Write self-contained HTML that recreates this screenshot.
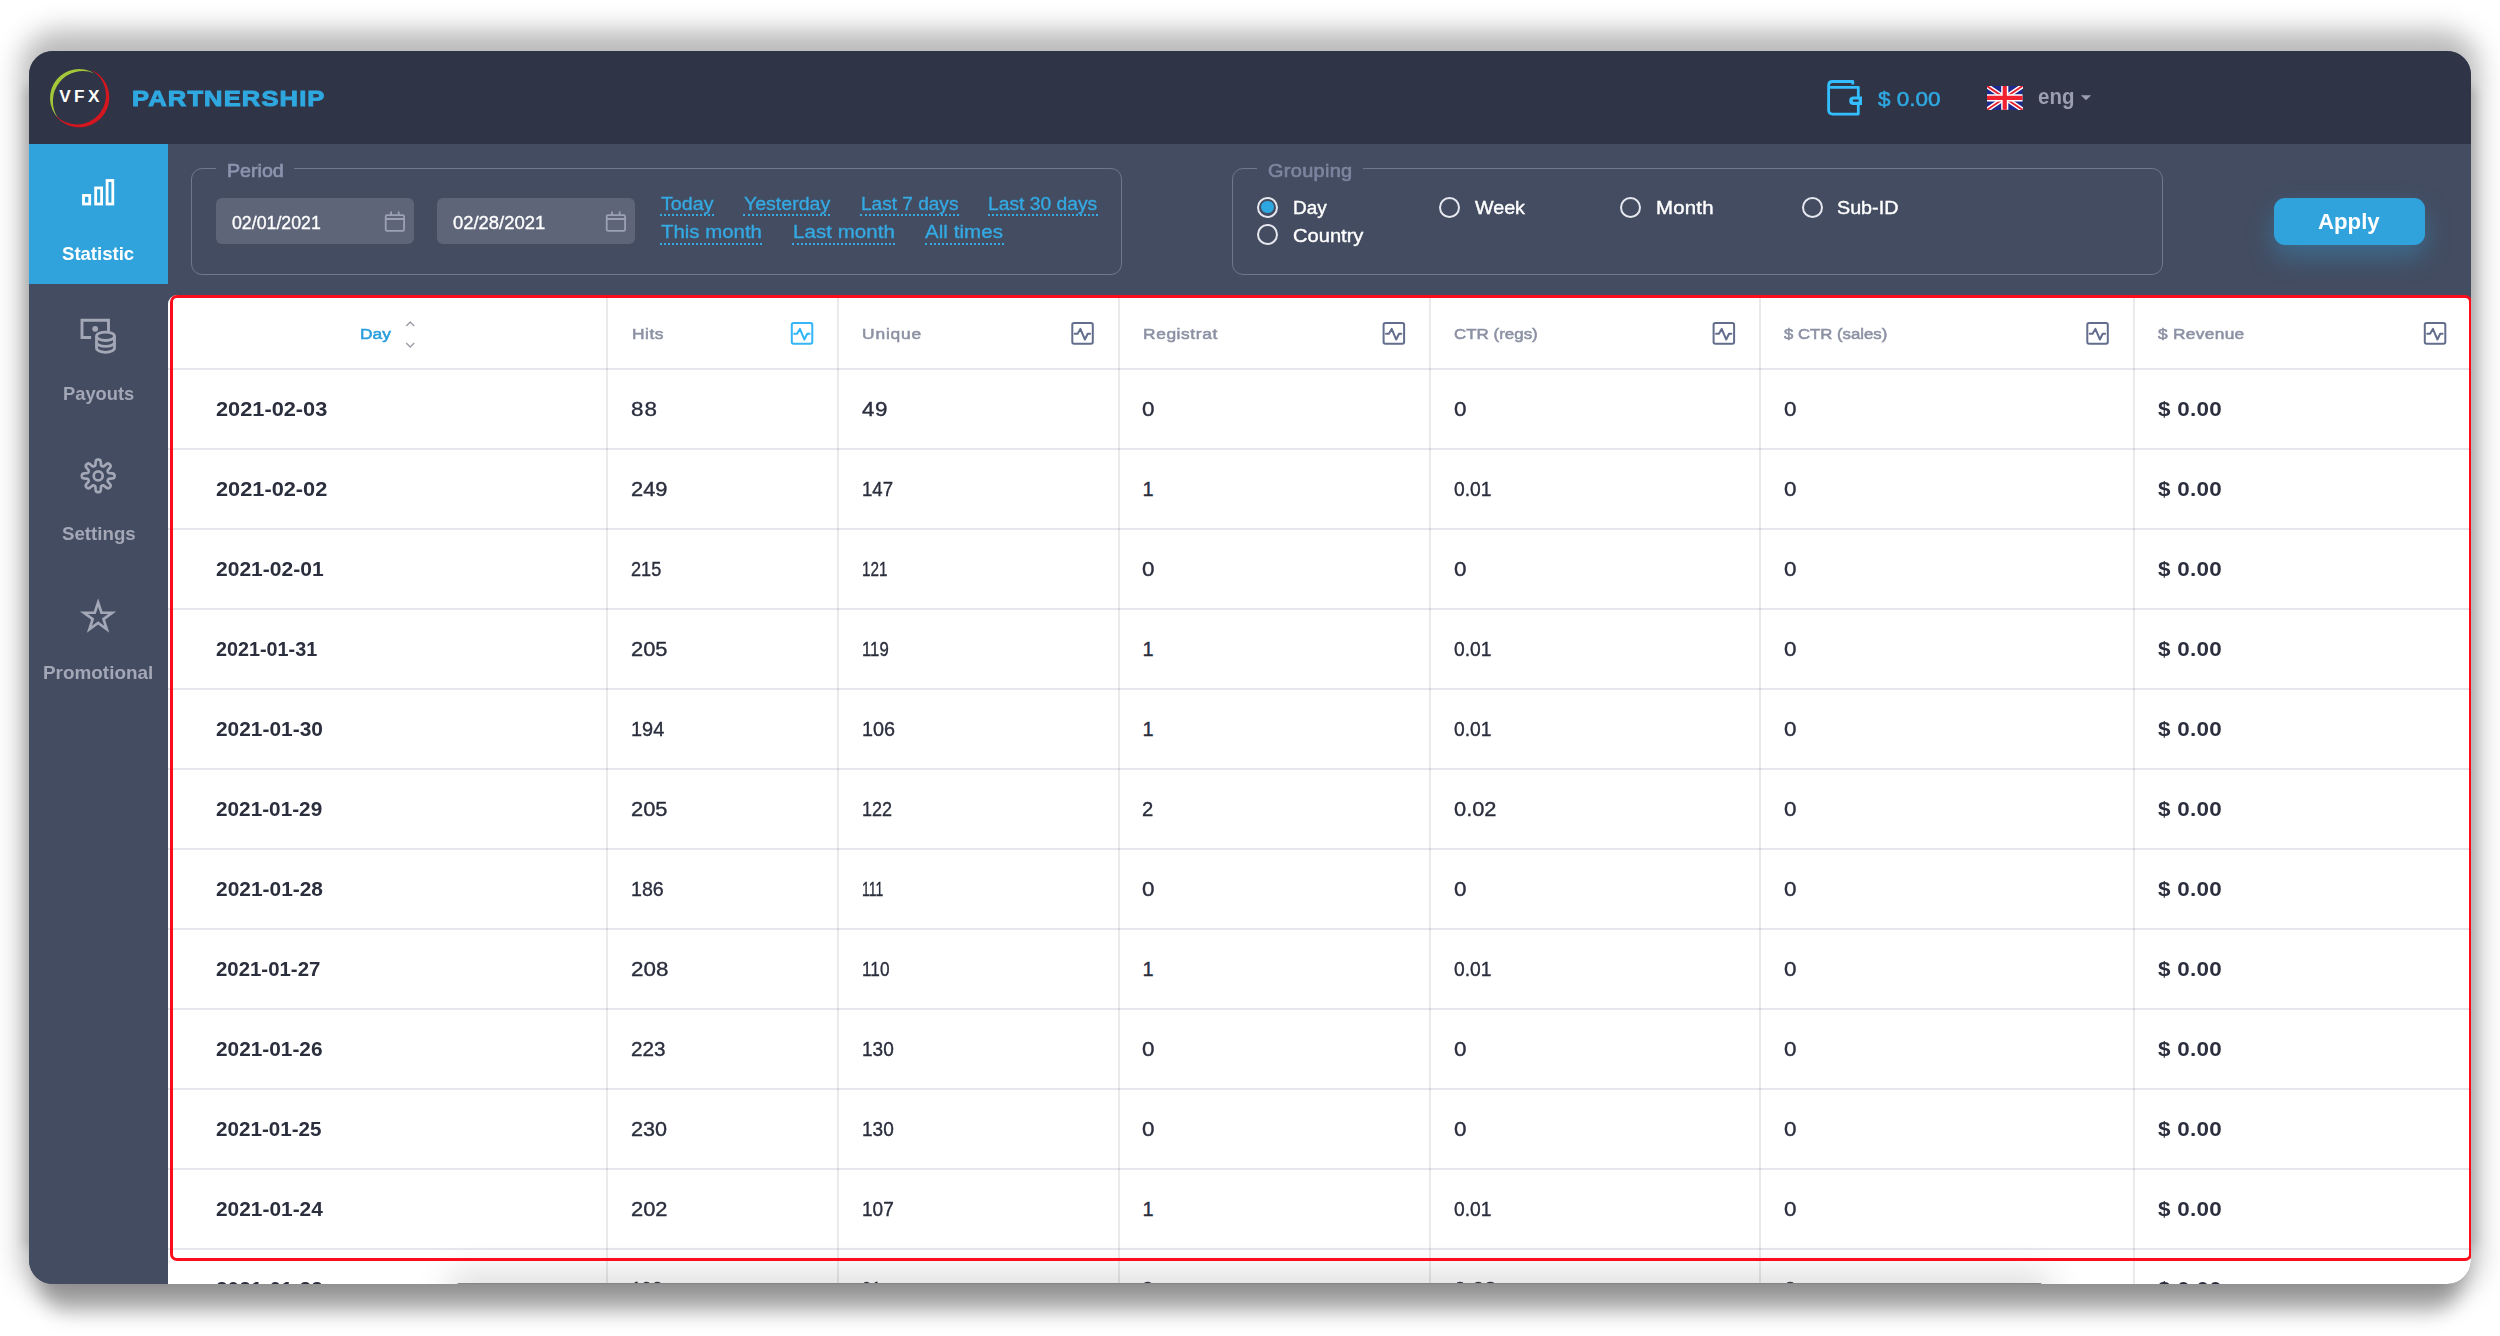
<!DOCTYPE html>
<html lang="en"><head><meta charset="utf-8"><title>VFX Partnership – Statistic</title>
<style>
html,body{margin:0;padding:0}
body{width:2500px;height:1336px;overflow:hidden;background:#fff;position:relative;font-family:"Liberation Sans",Arial,sans-serif}
.win{position:absolute;left:29px;top:51px;width:2442px;height:1233px;border-radius:24px;background:#434c61;
 }
.sh{position:absolute;border-radius:24px}
.clip{position:absolute;left:0;top:0;right:0;bottom:0;border-radius:24px;overflow:hidden}
.o{position:absolute;left:-29px;top:-51px;width:2500px;height:1336px}
.o *{position:absolute;box-sizing:border-box}
.t{white-space:nowrap;line-height:1;font-weight:400;transform-origin:0 50%}
svg{overflow:visible}
.grp{left:0;top:0;width:0;height:0}
.hbg{left:29px;top:51px;width:2442px;height:93px;background:#2f3446}
.nbg{left:29px;top:144px;width:139px;height:1140px;background:#434c61}
.act{left:29px;top:144px;width:139px;height:140px;background:#31a3dc}
.fs{border:1.5px solid #6f7791;border-radius:11px}
.legbg{background:#434c61}
.inp{background:#5e6579;border-radius:6px}
.dot{border-bottom:2px dotted #35a9e2;height:2px}
.radio{width:21px;height:21px;border:2px solid #e7e8ef;border-radius:50%}
.radio i{left:2.2px;top:2.2px;width:12.6px;height:12.6px;border-radius:50%;background:#2ea7e0}
.btn{left:2274px;top:198px;width:151px;height:46.5px;border-radius:11px;background:#31a3dc;box-shadow:0 12px 26px rgba(49,163,220,.36)}
.tbl{left:168px;top:295px;width:2303px;height:989px;background:#fff;border-radius:9px 9px 0 0}
.hl{left:168px;width:2303px;height:2px;background:rgba(70,76,110,.135)}
.vl{top:298px;width:2px;height:986px;background:rgba(70,72,100,.115)}
.red{left:170px;top:295px;width:2301.5px;height:966px;border:3px solid #fb0d1b;border-radius:7px}
.sb{left:457px;top:1283px;width:1585px;height:14px;background:#858585;border-radius:2px;box-shadow:0 0 34px 8px rgba(0,0,0,.16)}
</style></head><body>
<div class="sh" style="left:21px;top:30px;width:2458px;height:1264px;border-radius:38px;background:rgba(0,0,0,.27);filter:blur(13.5px)"></div>
<div class="sh" style="left:23px;top:85px;width:2454px;height:1165px;border-radius:10px;background:rgba(0,0,0,.12);filter:blur(5px)"></div>
<div class="sh" style="left:39px;top:1240px;width:2422px;height:72px;border-radius:30px;background:rgba(0,0,0,.28);filter:blur(10px)"></div>
<div class="win"><div class="clip"><div class="o">
<header class="grp"><div class="hbg"></div><svg style="left:45px;top:65px" width="70" height="66" viewBox="45 65 70 66" ><path d="M94.37 73.41A29.00 29.00 0 0 0 58.14 118.15A30.03 30.03 0 0 1 94.37 73.41Z" fill="#a4c639"/><path d="M90.54 69.48A30.00 30.00 0 1 1 54.73 114.51A29.24 29.24 0 1 0 90.54 69.48Z" fill="#d4161f"/></svg><span class="t" style="left:59.20px;top:87.64px;font-size:17.2px;letter-spacing:3.423px;font-weight:700;color:#fff;">VFX</span><span class="t" style="left:131.80px;top:87.00px;font-size:22.8px;letter-spacing:1.007px;transform:scaleX(1.1200);font-weight:700;color:#2fa8e0;-webkit-text-stroke:1.0px #2fa8e0;">PARTNERSHIP</span><svg style="left:1825px;top:78px" width="40" height="40" viewBox="1825 78 40 40" ><path d="M1852.8 84.6V81.5H1832.6Q1828.6 81.5 1828.6 85.5V110.1Q1828.6 114.1 1832.6 114.1H1858.3V87.3H1829" fill="none" stroke="#33bfff" stroke-width="2.8" stroke-linejoin="round"/><path d="M1862 96.4H1853.5Q1849.2 96.4 1849.2 100.7Q1849.2 105 1853.5 105H1862Z" fill="#33bfff"/><rect x="1852.8" y="99.6" width="6" height="2.2" rx="1" fill="#2f3446"/></svg><span class="t" style="left:1878.00px;top:87.82px;font-size:21px;transform:scaleX(1.0706);color:#2fa8e0;-webkit-text-stroke:0.55px #2fa8e0;">$ 0.00</span><svg style="left:1987px;top:86px;overflow:hidden" width="35.5" height="23.8" viewBox="0 0 60 40" preserveAspectRatio="none"><rect width="60" height="40" fill="#1b2a8c"/><path d="M0 0L60 40M60 0L0 40" stroke="#fff" stroke-width="8"/><path d="M0 0L60 40M60 0L0 40" stroke="#e8202e" stroke-width="3.2"/><path d="M30 0V40M0 20H60" stroke="#fff" stroke-width="12"/><path d="M30 0V40M0 20H60" stroke="#f0202e" stroke-width="7"/></svg><span class="t" style="left:2037.60px;top:86.60px;font-size:21.5px;transform:scaleX(0.9522);font-weight:700;color:#9a9eb0;">eng</span><svg style="left:2080px;top:94px" width="12" height="8" viewBox="2080 94 12 8" ><path d="M2080.8 95.2H2091.2L2086 100.2Z" fill="#9a9eb0"/></svg></header><nav class="grp"><div class="nbg"></div><div class="act"></div><svg style="left:80px;top:177px" width="36" height="30" viewBox="80 177 36 30" ><rect x="83.5" y="195.4" width="6.20" height="8.60" fill="none" stroke="#fff" stroke-width="2.8"/><rect x="95.65" y="187.95000000000002" width="5.95" height="16.05" fill="none" stroke="#fff" stroke-width="2.8"/><rect x="107.10000000000001" y="180.5" width="5.70" height="23.50" fill="none" stroke="#fff" stroke-width="2.8"/></svg><span class="t" style="left:62.20px;top:245.05px;font-size:18.6px;transform:scaleX(0.9979);font-weight:700;color:#fff;">Statistic</span><svg style="left:79px;top:317px" width="40" height="40" viewBox="79 317 40 40" ><path d="M91.1 337.5H82V320.2H108.5V331" fill="none" stroke="#a3a7b6" stroke-width="2.9"/><circle cx="95.2" cy="328.8" r="2.9" fill="#a3a7b6"/><g fill="none" stroke="#a3a7b6" stroke-width="2.8"><ellipse cx="105.5" cy="336.3" rx="9" ry="4.2"/><path d="M96.5 336.3V348.1A9 4.2 0 0 0 114.5 348.1V336.3"/><path d="M96.5 342.2A9 4.2 0 0 0 114.5 342.2"/></g></svg><span class="t" style="left:62.60px;top:384.75px;font-size:18.6px;transform:scaleX(0.9854);font-weight:700;color:#a3a7b6;">Payouts</span><svg style="left:79px;top:457px" width="40" height="40" viewBox="79 457 40 40" ><path d="M114.50 475.90L114.48 476.33L114.43 476.75L114.33 477.17L114.13 477.57L113.76 477.95L113.07 478.25L111.99 478.45L110.70 478.56L109.62 478.64L108.93 478.78L108.54 478.96L108.30 479.18L108.14 479.42L108.01 479.67L107.90 479.92L107.80 480.17L107.72 480.44L107.66 480.72L107.67 481.04L107.82 481.45L108.22 482.04L108.92 482.86L109.75 483.84L110.38 484.75L110.65 485.45L110.65 485.98L110.50 486.41L110.28 486.78L110.02 487.11L109.73 487.43L109.41 487.72L109.08 487.98L108.71 488.20L108.28 488.35L107.75 488.35L107.05 488.08L106.14 487.45L105.16 486.62L104.34 485.92L103.75 485.52L103.34 485.37L103.02 485.36L102.74 485.42L102.47 485.50L102.22 485.60L101.97 485.71L101.72 485.84L101.48 486.00L101.26 486.24L101.08 486.63L100.94 487.32L100.86 488.40L100.75 489.69L100.55 490.77L100.25 491.46L99.87 491.83L99.47 492.03L99.05 492.13L98.63 492.18L98.20 492.20L97.77 492.18L97.35 492.13L96.93 492.03L96.53 491.83L96.15 491.46L95.85 490.77L95.65 489.69L95.54 488.40L95.46 487.32L95.32 486.63L95.14 486.24L94.92 486.00L94.68 485.84L94.43 485.71L94.18 485.60L93.93 485.50L93.66 485.42L93.38 485.36L93.06 485.37L92.65 485.52L92.06 485.92L91.24 486.62L90.26 487.45L89.35 488.08L88.65 488.35L88.12 488.35L87.69 488.20L87.32 487.98L86.99 487.72L86.67 487.43L86.38 487.11L86.12 486.78L85.90 486.41L85.75 485.98L85.75 485.45L86.02 484.75L86.65 483.84L87.48 482.86L88.18 482.04L88.58 481.45L88.73 481.04L88.74 480.72L88.68 480.44L88.60 480.17L88.50 479.92L88.39 479.67L88.26 479.42L88.10 479.18L87.86 478.96L87.47 478.78L86.78 478.64L85.70 478.56L84.41 478.45L83.33 478.25L82.64 477.95L82.27 477.57L82.07 477.17L81.97 476.75L81.92 476.33L81.90 475.90L81.92 475.47L81.97 475.05L82.07 474.63L82.27 474.23L82.64 473.85L83.33 473.55L84.41 473.35L85.70 473.24L86.78 473.16L87.47 473.02L87.86 472.84L88.10 472.62L88.26 472.38L88.39 472.13L88.50 471.88L88.60 471.63L88.68 471.36L88.74 471.08L88.73 470.76L88.58 470.35L88.18 469.76L87.48 468.94L86.65 467.96L86.02 467.05L85.75 466.35L85.75 465.82L85.90 465.39L86.12 465.02L86.38 464.69L86.67 464.37L86.99 464.08L87.32 463.82L87.69 463.60L88.12 463.45L88.65 463.45L89.35 463.72L90.26 464.35L91.24 465.18L92.06 465.88L92.65 466.28L93.06 466.43L93.38 466.44L93.66 466.38L93.93 466.30L94.18 466.20L94.43 466.09L94.68 465.96L94.92 465.80L95.14 465.56L95.32 465.17L95.46 464.48L95.54 463.40L95.65 462.11L95.85 461.03L96.15 460.34L96.53 459.97L96.93 459.77L97.35 459.67L97.77 459.62L98.20 459.60L98.63 459.62L99.05 459.67L99.47 459.77L99.87 459.97L100.25 460.34L100.55 461.03L100.75 462.11L100.86 463.40L100.94 464.48L101.08 465.17L101.26 465.56L101.48 465.80L101.72 465.96L101.97 466.09L102.22 466.20L102.47 466.30L102.74 466.38L103.02 466.44L103.34 466.43L103.75 466.28L104.34 465.88L105.16 465.18L106.14 464.35L107.05 463.72L107.75 463.45L108.28 463.45L108.71 463.60L109.08 463.82L109.41 464.08L109.73 464.37L110.02 464.69L110.28 465.02L110.50 465.39L110.65 465.82L110.65 466.35L110.38 467.05L109.75 467.96L108.92 468.94L108.22 469.76L107.82 470.35L107.67 470.76L107.66 471.08L107.72 471.36L107.80 471.63L107.90 471.88L108.01 472.13L108.14 472.38L108.30 472.62L108.54 472.84L108.93 473.02L109.62 473.16L110.70 473.24L111.99 473.35L113.07 473.55L113.76 473.85L114.13 474.23L114.33 474.63L114.43 475.05L114.48 475.47Z" fill="none" stroke="#a3a7b6" stroke-width="2.7" stroke-linejoin="round"/><circle cx="98.2" cy="475.9" r="4.5" fill="none" stroke="#a3a7b6" stroke-width="2.7"/></svg><span class="t" style="left:61.50px;top:524.55px;font-size:18.6px;transform:scaleX(1.0058);font-weight:700;color:#a3a7b6;">Settings</span><svg style="left:79px;top:597px" width="40" height="40" viewBox="79 597 40 40" ><path d="M98.10 602.50L101.45 612.69L112.18 612.73L103.52 619.06L106.80 629.27L98.10 623.00L89.40 629.27L92.68 619.06L84.02 612.73L94.75 612.69Z" fill="none" stroke="#a3a7b6" stroke-width="2.7" stroke-linejoin="miter" stroke-miterlimit="10"/></svg><span class="t" style="left:43.10px;top:664.25px;font-size:18.6px;transform:scaleX(1.0165);font-weight:700;color:#a3a7b6;">Promotional</span></nav><section class="grp"><div class="fs" style="left:190.7px;top:167.5px;width:931.5px;height:107.5px"></div><div class="legbg" style="left:216px;top:160px;width:78px;height:16px"></div><span class="t" style="left:227.40px;top:162.93px;font-size:17.8px;transform:scaleX(1.1038);color:#8d94af;-webkit-text-stroke:0.6px #8d94af;">Period</span><div class="inp" style="left:216px;top:198px;width:197.7px;height:46.3px"></div><span class="t" style="left:232.00px;top:213.21px;font-size:19px;transform:scaleX(0.9333);color:#fff;-webkit-text-stroke:0.35px #fff;">02/01/2021</span><svg style="left:383px;top:210px" width="25" height="24" viewBox="383 210 25 24" ><g fill="none" stroke="#9ba1b3" stroke-width="1.8"><rect x="385.7" y="215.1" width="18.4" height="15.8" rx="1.5"/><path d="M385.7 219H404.09999999999997M391.09999999999997 211.5V215M398.7 211.5V215"/></g></svg><div class="inp" style="left:437px;top:198px;width:197.7px;height:46.3px"></div><span class="t" style="left:453.25px;top:213.21px;font-size:19px;transform:scaleX(0.9701);color:#fff;-webkit-text-stroke:0.35px #fff;">02/28/2021</span><svg style="left:604px;top:210px" width="25" height="24" viewBox="604 210 25 24" ><g fill="none" stroke="#9ba1b3" stroke-width="1.8"><rect x="606.7" y="215.1" width="18.4" height="15.8" rx="1.5"/><path d="M606.7 219H625.1M612.1 211.5V215M619.7 211.5V215"/></g></svg><span class="t" style="left:660.75px;top:194.51px;font-size:18.3px;transform:scaleX(1.0753);color:#35a9e2;-webkit-text-stroke:0.35px #35a9e2;">Today</span><div class="dot" style="left:660.25px;top:214.3px;width:53.5px"></div><span class="t" style="left:743.75px;top:194.51px;font-size:18.3px;transform:scaleX(1.0685);color:#35a9e2;-webkit-text-stroke:0.35px #35a9e2;">Yesterday</span><div class="dot" style="left:743.25px;top:214.3px;width:87.2px"></div><span class="t" style="left:860.50px;top:194.51px;font-size:18.3px;transform:scaleX(1.0418);color:#35a9e2;-webkit-text-stroke:0.35px #35a9e2;">Last 7 days</span><div class="dot" style="left:860.0px;top:214.3px;width:98.5px"></div><span class="t" style="left:988.25px;top:194.51px;font-size:18.3px;transform:scaleX(1.0529);color:#35a9e2;-webkit-text-stroke:0.35px #35a9e2;">Last 30 days</span><div class="dot" style="left:987.75px;top:214.3px;width:110.2px"></div><span class="t" style="left:660.75px;top:223.31px;font-size:18.3px;transform:scaleX(1.1159);color:#35a9e2;-webkit-text-stroke:0.35px #35a9e2;">This month</span><div class="dot" style="left:660.25px;top:243.10000000000002px;width:102.0px"></div><span class="t" style="left:792.50px;top:223.31px;font-size:18.3px;letter-spacing:0.060px;transform:scaleX(1.1200);color:#35a9e2;-webkit-text-stroke:0.35px #35a9e2;">Last month</span><div class="dot" style="left:792.0px;top:243.10000000000002px;width:103.0px"></div><span class="t" style="left:925.00px;top:223.31px;font-size:18.3px;letter-spacing:0.063px;transform:scaleX(1.1200);color:#35a9e2;-webkit-text-stroke:0.35px #35a9e2;">All times</span><div class="dot" style="left:924.5px;top:243.10000000000002px;width:79.0px"></div><div class="fs" style="left:1231.8px;top:167.5px;width:931.5px;height:107.5px"></div><div class="legbg" style="left:1257px;top:160px;width:106px;height:16px"></div><span class="t" style="left:1267.50px;top:162.93px;font-size:17.8px;letter-spacing:0.285px;transform:scaleX(1.1200);color:#7d859f;-webkit-text-stroke:0.6px #7d859f;">Grouping</span><div class="radio" style="left:1256.9px;top:196.5px"><i></i></div><span class="t" style="left:1293.10px;top:198.99px;font-size:18.2px;transform:scaleX(1.0414);color:#fff;-webkit-text-stroke:0.4px #fff;">Day</span><div class="radio" style="left:1438.7px;top:196.5px"></div><span class="t" style="left:1474.50px;top:198.99px;font-size:18.2px;transform:scaleX(1.0816);color:#fff;-webkit-text-stroke:0.4px #fff;">Week</span><div class="radio" style="left:1620.3px;top:196.5px"></div><span class="t" style="left:1656.25px;top:198.99px;font-size:18.2px;letter-spacing:0.190px;transform:scaleX(1.1200);color:#fff;-webkit-text-stroke:0.4px #fff;">Month</span><div class="radio" style="left:1801.9px;top:196.5px"></div><span class="t" style="left:1837.20px;top:198.99px;font-size:18.2px;transform:scaleX(1.0841);color:#fff;-webkit-text-stroke:0.4px #fff;">Sub-ID</span><div class="radio" style="left:1256.9px;top:224.2px"></div><span class="t" style="left:1292.80px;top:226.69px;font-size:18.2px;transform:scaleX(1.1056);color:#fff;-webkit-text-stroke:0.4px #fff;">Country</span><div class="btn"></div><span class="t" style="left:2318.25px;top:210.85px;font-size:21.2px;transform:scaleX(1.0485);font-weight:700;color:#fff;">Apply</span></section><main class="grp"><div class="tbl"></div><div class="vl" style="left:605.75px"></div><div class="vl" style="left:837.00px"></div><div class="vl" style="left:1117.75px"></div><div class="vl" style="left:1428.80px"></div><div class="vl" style="left:1759.00px"></div><div class="vl" style="left:2133.10px"></div><div class="hl" style="top:368px"></div><div class="hl" style="top:448px"></div><div class="hl" style="top:528px"></div><div class="hl" style="top:608px"></div><div class="hl" style="top:688px"></div><div class="hl" style="top:768px"></div><div class="hl" style="top:848px"></div><div class="hl" style="top:928px"></div><div class="hl" style="top:1008px"></div><div class="hl" style="top:1088px"></div><div class="hl" style="top:1168px"></div><div class="hl" style="top:1248px"></div><span class="t" style="left:359.90px;top:325.78px;font-size:15.5px;letter-spacing:0.015px;transform:scaleX(1.1200);color:#2a9fdc;-webkit-text-stroke:0.55px #2a9fdc;">Day</span><svg style="left:404px;top:319px" width="13" height="31" viewBox="404 319 13 31" ><path d="M406.2 326L410.2 322L414.2 326M406.2 343L410.2 347L414.2 343" fill="none" stroke="#9d9fa9" stroke-width="1.5"/></svg><span class="t" style="left:631.50px;top:325.78px;font-size:15.5px;letter-spacing:0.448px;transform:scaleX(1.1200);color:#8c91a4;-webkit-text-stroke:0.55px #8c91a4;">Hits</span><span class="t" style="left:862.00px;top:325.78px;font-size:15.5px;letter-spacing:0.756px;transform:scaleX(1.1200);color:#8c91a4;-webkit-text-stroke:0.55px #8c91a4;">Unique</span><span class="t" style="left:1143.30px;top:325.78px;font-size:15.5px;letter-spacing:0.529px;transform:scaleX(1.1200);color:#8c91a4;-webkit-text-stroke:0.55px #8c91a4;">Registrat</span><span class="t" style="left:1453.75px;top:325.78px;font-size:15.5px;transform:scaleX(1.0929);color:#8c91a4;-webkit-text-stroke:0.55px #8c91a4;">CTR (regs)</span><span class="t" style="left:1783.75px;top:325.78px;font-size:15.5px;transform:scaleX(1.0800);color:#8c91a4;-webkit-text-stroke:0.55px #8c91a4;">$ CTR (sales)</span><span class="t" style="left:2157.50px;top:325.78px;font-size:15.5px;letter-spacing:0.254px;transform:scaleX(1.1200);color:#8c91a4;-webkit-text-stroke:0.55px #8c91a4;">$ Revenue</span><svg style="left:790px;top:321px" width="25" height="25" viewBox="790 321 25 25" ><g fill="none" stroke="#33b5f7" stroke-width="2" stroke-linejoin="round" stroke-linecap="round"><rect x="791.8" y="322.9" width="20.5" height="20.9" rx="1.8"/><path d="M794.1999999999999 333.8H797.0999999999999L799.9 328.9L804.4 339.5L807.1999999999999 333.8H809.5999999999999"/></g></svg><svg style="left:1071px;top:321px" width="25" height="25" viewBox="1071 321 25 25" ><g fill="none" stroke="#636d8c" stroke-width="2" stroke-linejoin="round" stroke-linecap="round"><rect x="1072.3" y="322.9" width="20.5" height="20.9" rx="1.8"/><path d="M1074.7 333.8H1077.6L1080.3999999999999 328.9L1084.8999999999999 339.5L1087.7 333.8H1090.1"/></g></svg><svg style="left:1382px;top:321px" width="25" height="25" viewBox="1382 321 25 25" ><g fill="none" stroke="#636d8c" stroke-width="2" stroke-linejoin="round" stroke-linecap="round"><rect x="1383.6" y="322.9" width="20.5" height="20.9" rx="1.8"/><path d="M1386.0 333.8H1388.8999999999999L1391.6999999999998 328.9L1396.1999999999998 339.5L1399.0 333.8H1401.3999999999999"/></g></svg><svg style="left:1712px;top:321px" width="25" height="25" viewBox="1712 321 25 25" ><g fill="none" stroke="#636d8c" stroke-width="2" stroke-linejoin="round" stroke-linecap="round"><rect x="1713.6" y="322.9" width="20.5" height="20.9" rx="1.8"/><path d="M1716.0 333.8H1718.8999999999999L1721.6999999999998 328.9L1726.1999999999998 339.5L1729.0 333.8H1731.3999999999999"/></g></svg><svg style="left:2086px;top:321px" width="25" height="25" viewBox="2086 321 25 25" ><g fill="none" stroke="#636d8c" stroke-width="2" stroke-linejoin="round" stroke-linecap="round"><rect x="2087.3" y="322.9" width="20.5" height="20.9" rx="1.8"/><path d="M2089.7000000000003 333.8H2092.6000000000004L2095.4 328.9L2099.9 339.5L2102.7000000000003 333.8H2105.1000000000004"/></g></svg><svg style="left:2423px;top:321px" width="25" height="25" viewBox="2423 321 25 25" ><g fill="none" stroke="#636d8c" stroke-width="2" stroke-linejoin="round" stroke-linecap="round"><rect x="2424.8" y="322.9" width="20.5" height="20.9" rx="1.8"/><path d="M2427.2000000000003 333.8H2430.1000000000004L2432.9 328.9L2437.4 339.5L2440.2000000000003 333.8H2442.6000000000004"/></g></svg><span class="t" style="left:216.25px;top:399.07px;font-size:20px;transform:scaleX(1.0880);font-weight:700;color:#2a2e3d;">2021-02-03</span><span class="t" style="left:630.75px;top:399.07px;font-size:20px;letter-spacing:0.974px;transform:scaleX(1.1200);color:#2a2e3d;-webkit-text-stroke:0.35px #2a2e3d;">88</span><span class="t" style="left:862.00px;top:399.07px;font-size:20px;letter-spacing:0.528px;transform:scaleX(1.1200);color:#2a2e3d;-webkit-text-stroke:0.35px #2a2e3d;">49</span><span class="t" style="left:1142.40px;top:399.07px;font-size:20px;transform:scaleX(1.1200);color:#2a2e3d;-webkit-text-stroke:0.35px #2a2e3d;">0</span><span class="t" style="left:1453.75px;top:399.07px;font-size:20px;transform:scaleX(1.1200);color:#2a2e3d;-webkit-text-stroke:0.35px #2a2e3d;">0</span><span class="t" style="left:1783.75px;top:399.07px;font-size:20px;transform:scaleX(1.1200);color:#2a2e3d;-webkit-text-stroke:0.35px #2a2e3d;">0</span><span class="t" style="left:2157.50px;top:399.07px;font-size:20px;letter-spacing:0.264px;transform:scaleX(1.1200);font-weight:700;color:#2a2e3d;">$ 0.00</span><span class="t" style="left:216.25px;top:479.07px;font-size:20px;transform:scaleX(1.0880);font-weight:700;color:#2a2e3d;">2021-02-02</span><span class="t" style="left:630.75px;top:479.07px;font-size:20px;transform:scaleX(1.0941);color:#2a2e3d;-webkit-text-stroke:0.35px #2a2e3d;">249</span><span class="t" style="left:862.00px;top:479.07px;font-size:20px;transform:scaleX(0.9293);color:#2a2e3d;-webkit-text-stroke:0.35px #2a2e3d;">147</span><span class="t" style="left:1142.40px;top:479.07px;font-size:20px;color:#2a2e3d;-webkit-text-stroke:0.35px #2a2e3d;">1</span><span class="t" style="left:1453.75px;top:479.07px;font-size:20px;transform:scaleX(0.9635);color:#2a2e3d;-webkit-text-stroke:0.35px #2a2e3d;">0.01</span><span class="t" style="left:1783.75px;top:479.07px;font-size:20px;transform:scaleX(1.1200);color:#2a2e3d;-webkit-text-stroke:0.35px #2a2e3d;">0</span><span class="t" style="left:2157.50px;top:479.07px;font-size:20px;letter-spacing:0.264px;transform:scaleX(1.1200);font-weight:700;color:#2a2e3d;">$ 0.00</span><span class="t" style="left:216.25px;top:559.07px;font-size:20px;transform:scaleX(1.0518);font-weight:700;color:#2a2e3d;">2021-02-01</span><span class="t" style="left:630.75px;top:559.07px;font-size:20px;transform:scaleX(0.9068);color:#2a2e3d;-webkit-text-stroke:0.35px #2a2e3d;">215</span><span class="t" style="left:862.00px;top:559.07px;font-size:20px;transform:scaleX(0.7644);color:#2a2e3d;-webkit-text-stroke:0.35px #2a2e3d;">121</span><span class="t" style="left:1142.40px;top:559.07px;font-size:20px;transform:scaleX(1.1200);color:#2a2e3d;-webkit-text-stroke:0.35px #2a2e3d;">0</span><span class="t" style="left:1453.75px;top:559.07px;font-size:20px;transform:scaleX(1.1200);color:#2a2e3d;-webkit-text-stroke:0.35px #2a2e3d;">0</span><span class="t" style="left:1783.75px;top:559.07px;font-size:20px;transform:scaleX(1.1200);color:#2a2e3d;-webkit-text-stroke:0.35px #2a2e3d;">0</span><span class="t" style="left:2157.50px;top:559.07px;font-size:20px;letter-spacing:0.264px;transform:scaleX(1.1200);font-weight:700;color:#2a2e3d;">$ 0.00</span><span class="t" style="left:216.25px;top:639.07px;font-size:20px;transform:scaleX(0.9892);font-weight:700;color:#2a2e3d;">2021-01-31</span><span class="t" style="left:630.75px;top:639.07px;font-size:20px;transform:scaleX(1.0941);color:#2a2e3d;-webkit-text-stroke:0.35px #2a2e3d;">205</span><span class="t" style="left:862.00px;top:639.07px;font-size:20px;transform:scaleX(0.8391);color:#2a2e3d;-webkit-text-stroke:0.35px #2a2e3d;">119</span><span class="t" style="left:1142.40px;top:639.07px;font-size:20px;color:#2a2e3d;-webkit-text-stroke:0.35px #2a2e3d;">1</span><span class="t" style="left:1453.75px;top:639.07px;font-size:20px;transform:scaleX(0.9635);color:#2a2e3d;-webkit-text-stroke:0.35px #2a2e3d;">0.01</span><span class="t" style="left:1783.75px;top:639.07px;font-size:20px;transform:scaleX(1.1200);color:#2a2e3d;-webkit-text-stroke:0.35px #2a2e3d;">0</span><span class="t" style="left:2157.50px;top:639.07px;font-size:20px;letter-spacing:0.264px;transform:scaleX(1.1200);font-weight:700;color:#2a2e3d;">$ 0.00</span><span class="t" style="left:216.25px;top:719.07px;font-size:20px;transform:scaleX(1.0450);font-weight:700;color:#2a2e3d;">2021-01-30</span><span class="t" style="left:630.75px;top:719.07px;font-size:20px;transform:scaleX(0.9967);color:#2a2e3d;-webkit-text-stroke:0.35px #2a2e3d;">194</span><span class="t" style="left:862.00px;top:719.07px;font-size:20px;transform:scaleX(0.9892);color:#2a2e3d;-webkit-text-stroke:0.35px #2a2e3d;">106</span><span class="t" style="left:1142.40px;top:719.07px;font-size:20px;color:#2a2e3d;-webkit-text-stroke:0.35px #2a2e3d;">1</span><span class="t" style="left:1453.75px;top:719.07px;font-size:20px;transform:scaleX(0.9635);color:#2a2e3d;-webkit-text-stroke:0.35px #2a2e3d;">0.01</span><span class="t" style="left:1783.75px;top:719.07px;font-size:20px;transform:scaleX(1.1200);color:#2a2e3d;-webkit-text-stroke:0.35px #2a2e3d;">0</span><span class="t" style="left:2157.50px;top:719.07px;font-size:20px;letter-spacing:0.264px;transform:scaleX(1.1200);font-weight:700;color:#2a2e3d;">$ 0.00</span><span class="t" style="left:216.25px;top:799.07px;font-size:20px;transform:scaleX(1.0381);font-weight:700;color:#2a2e3d;">2021-01-29</span><span class="t" style="left:630.75px;top:799.07px;font-size:20px;transform:scaleX(1.0941);color:#2a2e3d;-webkit-text-stroke:0.35px #2a2e3d;">205</span><span class="t" style="left:862.00px;top:799.07px;font-size:20px;transform:scaleX(0.8993);color:#2a2e3d;-webkit-text-stroke:0.35px #2a2e3d;">122</span><span class="t" style="left:1142.40px;top:799.07px;font-size:20px;transform:scaleX(1.0117);color:#2a2e3d;-webkit-text-stroke:0.35px #2a2e3d;">2</span><span class="t" style="left:1453.75px;top:799.07px;font-size:20px;transform:scaleX(1.0920);color:#2a2e3d;-webkit-text-stroke:0.35px #2a2e3d;">0.02</span><span class="t" style="left:1783.75px;top:799.07px;font-size:20px;transform:scaleX(1.1200);color:#2a2e3d;-webkit-text-stroke:0.35px #2a2e3d;">0</span><span class="t" style="left:2157.50px;top:799.07px;font-size:20px;letter-spacing:0.264px;transform:scaleX(1.1200);font-weight:700;color:#2a2e3d;">$ 0.00</span><span class="t" style="left:216.25px;top:879.07px;font-size:20px;transform:scaleX(1.0459);font-weight:700;color:#2a2e3d;">2021-01-28</span><span class="t" style="left:630.75px;top:879.07px;font-size:20px;transform:scaleX(0.9817);color:#2a2e3d;-webkit-text-stroke:0.35px #2a2e3d;">186</span><span class="t" style="left:862.00px;top:879.07px;font-size:20px;letter-spacing:-0.021px;transform:scaleX(0.7000);color:#2a2e3d;-webkit-text-stroke:0.35px #2a2e3d;">111</span><span class="t" style="left:1142.40px;top:879.07px;font-size:20px;transform:scaleX(1.1200);color:#2a2e3d;-webkit-text-stroke:0.35px #2a2e3d;">0</span><span class="t" style="left:1453.75px;top:879.07px;font-size:20px;transform:scaleX(1.1200);color:#2a2e3d;-webkit-text-stroke:0.35px #2a2e3d;">0</span><span class="t" style="left:1783.75px;top:879.07px;font-size:20px;transform:scaleX(1.1200);color:#2a2e3d;-webkit-text-stroke:0.35px #2a2e3d;">0</span><span class="t" style="left:2157.50px;top:879.07px;font-size:20px;letter-spacing:0.264px;transform:scaleX(1.1200);font-weight:700;color:#2a2e3d;">$ 0.00</span><span class="t" style="left:216.25px;top:959.07px;font-size:20px;transform:scaleX(1.0196);font-weight:700;color:#2a2e3d;">2021-01-27</span><span class="t" style="left:630.75px;top:959.07px;font-size:20px;letter-spacing:0.061px;transform:scaleX(1.1200);color:#2a2e3d;-webkit-text-stroke:0.35px #2a2e3d;">208</span><span class="t" style="left:862.00px;top:959.07px;font-size:20px;transform:scaleX(0.8626);color:#2a2e3d;-webkit-text-stroke:0.35px #2a2e3d;">110</span><span class="t" style="left:1142.40px;top:959.07px;font-size:20px;color:#2a2e3d;-webkit-text-stroke:0.35px #2a2e3d;">1</span><span class="t" style="left:1453.75px;top:959.07px;font-size:20px;transform:scaleX(0.9635);color:#2a2e3d;-webkit-text-stroke:0.35px #2a2e3d;">0.01</span><span class="t" style="left:1783.75px;top:959.07px;font-size:20px;transform:scaleX(1.1200);color:#2a2e3d;-webkit-text-stroke:0.35px #2a2e3d;">0</span><span class="t" style="left:2157.50px;top:959.07px;font-size:20px;letter-spacing:0.264px;transform:scaleX(1.1200);font-weight:700;color:#2a2e3d;">$ 0.00</span><span class="t" style="left:216.25px;top:1039.07px;font-size:20px;transform:scaleX(1.0411);font-weight:700;color:#2a2e3d;">2021-01-26</span><span class="t" style="left:630.75px;top:1039.07px;font-size:20px;transform:scaleX(1.0342);color:#2a2e3d;-webkit-text-stroke:0.35px #2a2e3d;">223</span><span class="t" style="left:862.00px;top:1039.07px;font-size:20px;transform:scaleX(0.9517);color:#2a2e3d;-webkit-text-stroke:0.35px #2a2e3d;">130</span><span class="t" style="left:1142.40px;top:1039.07px;font-size:20px;transform:scaleX(1.1200);color:#2a2e3d;-webkit-text-stroke:0.35px #2a2e3d;">0</span><span class="t" style="left:1453.75px;top:1039.07px;font-size:20px;transform:scaleX(1.1200);color:#2a2e3d;-webkit-text-stroke:0.35px #2a2e3d;">0</span><span class="t" style="left:1783.75px;top:1039.07px;font-size:20px;transform:scaleX(1.1200);color:#2a2e3d;-webkit-text-stroke:0.35px #2a2e3d;">0</span><span class="t" style="left:2157.50px;top:1039.07px;font-size:20px;letter-spacing:0.264px;transform:scaleX(1.1200);font-weight:700;color:#2a2e3d;">$ 0.00</span><span class="t" style="left:216.25px;top:1119.07px;font-size:20px;transform:scaleX(1.0313);font-weight:700;color:#2a2e3d;">2021-01-25</span><span class="t" style="left:630.75px;top:1119.07px;font-size:20px;transform:scaleX(1.0791);color:#2a2e3d;-webkit-text-stroke:0.35px #2a2e3d;">230</span><span class="t" style="left:862.00px;top:1119.07px;font-size:20px;transform:scaleX(0.9517);color:#2a2e3d;-webkit-text-stroke:0.35px #2a2e3d;">130</span><span class="t" style="left:1142.40px;top:1119.07px;font-size:20px;transform:scaleX(1.1200);color:#2a2e3d;-webkit-text-stroke:0.35px #2a2e3d;">0</span><span class="t" style="left:1453.75px;top:1119.07px;font-size:20px;transform:scaleX(1.1200);color:#2a2e3d;-webkit-text-stroke:0.35px #2a2e3d;">0</span><span class="t" style="left:1783.75px;top:1119.07px;font-size:20px;transform:scaleX(1.1200);color:#2a2e3d;-webkit-text-stroke:0.35px #2a2e3d;">0</span><span class="t" style="left:2157.50px;top:1119.07px;font-size:20px;letter-spacing:0.264px;transform:scaleX(1.1200);font-weight:700;color:#2a2e3d;">$ 0.00</span><span class="t" style="left:216.25px;top:1199.07px;font-size:20px;transform:scaleX(1.0440);font-weight:700;color:#2a2e3d;">2021-01-24</span><span class="t" style="left:630.75px;top:1199.07px;font-size:20px;transform:scaleX(1.0941);color:#2a2e3d;-webkit-text-stroke:0.35px #2a2e3d;">202</span><span class="t" style="left:862.00px;top:1199.07px;font-size:20px;transform:scaleX(0.9517);color:#2a2e3d;-webkit-text-stroke:0.35px #2a2e3d;">107</span><span class="t" style="left:1142.40px;top:1199.07px;font-size:20px;color:#2a2e3d;-webkit-text-stroke:0.35px #2a2e3d;">1</span><span class="t" style="left:1453.75px;top:1199.07px;font-size:20px;transform:scaleX(0.9635);color:#2a2e3d;-webkit-text-stroke:0.35px #2a2e3d;">0.01</span><span class="t" style="left:1783.75px;top:1199.07px;font-size:20px;transform:scaleX(1.1200);color:#2a2e3d;-webkit-text-stroke:0.35px #2a2e3d;">0</span><span class="t" style="left:2157.50px;top:1199.07px;font-size:20px;letter-spacing:0.264px;transform:scaleX(1.1200);font-weight:700;color:#2a2e3d;">$ 0.00</span><span class="t" style="left:216.25px;top:1279.07px;font-size:20px;transform:scaleX(1.0440);font-weight:700;color:#2a2e3d;">2021-01-23</span><span class="t" style="left:630.75px;top:1279.07px;font-size:20px;transform:scaleX(0.9442);color:#2a2e3d;-webkit-text-stroke:0.35px #2a2e3d;">192</span><span class="t" style="left:862.00px;top:1279.07px;font-size:20px;transform:scaleX(0.8543);color:#2a2e3d;-webkit-text-stroke:0.35px #2a2e3d;">91</span><span class="t" style="left:1142.40px;top:1279.07px;font-size:20px;transform:scaleX(1.0117);color:#2a2e3d;-webkit-text-stroke:0.35px #2a2e3d;">2</span><span class="t" style="left:1453.75px;top:1279.07px;font-size:20px;transform:scaleX(1.0920);color:#2a2e3d;-webkit-text-stroke:0.35px #2a2e3d;">0.02</span><span class="t" style="left:1783.75px;top:1279.07px;font-size:20px;transform:scaleX(1.1200);color:#2a2e3d;-webkit-text-stroke:0.35px #2a2e3d;">0</span><span class="t" style="left:2157.50px;top:1279.07px;font-size:20px;letter-spacing:0.264px;transform:scaleX(1.1200);font-weight:700;color:#2a2e3d;">$ 0.00</span><div class="sb"></div></main><div class="red"></div></div></div></div>
</body></html>
